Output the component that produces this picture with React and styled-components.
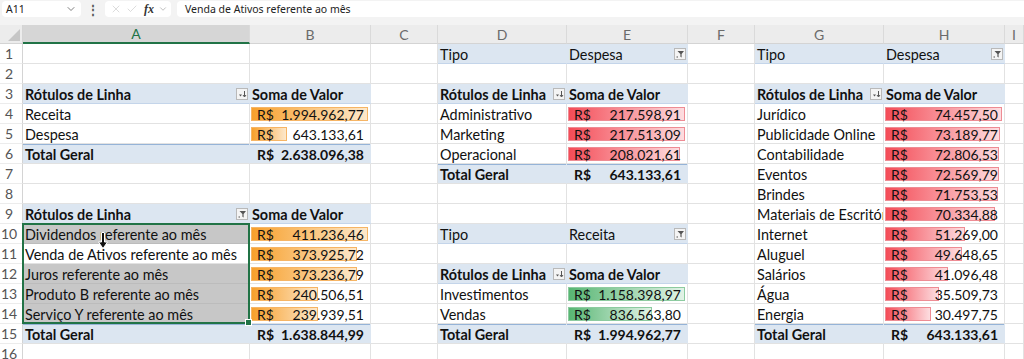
import React from "react";
import styled, { createGlobalStyle, css } from "styled-components";
import { X, Check, ChevronDown } from "lucide-react";

const sheetFont = "Lato, 'Liberation Sans', sans-serif";
const uiFont = "'Noto Sans', 'Open Sans', sans-serif";

const colors = {
  grid: "#e2e2e2",
  pivot: "#dce6f1",
  pivotLine: "#c4d5ea",
  totalLine: "#95b3d7",
  chrome: "#f3f3f3",
  header: "#ececec",
  selected: "#c7c7c7",
  excelGreen: "#217346",
};

const TONES = {
  orange: { from: "#f7a02c", to: "#fde8cb", line: "#f6b565" },
  red: { from: "#f44c57", to: "#fddde0", line: "#ee8c94" },
  green: { from: "#58b673", to: "#e2f3e7", line: "#8dcba0" },
};

const COLUMNS = ["A", "B", "C", "D", "E", "F", "G", "H", "I"];

const GlobalStyle = createGlobalStyle`
  html, body {
    margin: 0;
    padding: 0;
    background: #ffffff;
    overflow: hidden;
  }
  body {
    font-family: ${sheetFont};
  }
`;

const Page = styled.div`
  width: 1024px;
  height: 359px;
  overflow: hidden;
  background: ${colors.chrome};
`;

// formula bar
const Toolbar = styled.div`
  height: 16px;
  padding: 1px 0 8px 2px;
  display: flex;
  align-items: stretch;
  gap: 6px;
  font-family: ${uiFont};
  font-size: 10.5px;
  color: #222;
`;

const NameBox = styled.div`
  width: 79px;
  background: #fff;
  border-radius: 4px;
  display: flex;
  align-items: center;
  justify-content: space-between;
  padding: 0 4px 0 4px;
  box-sizing: border-box;
`;

const Dots = styled.div`
  width: 12px;
  display: flex;
  align-items: center;
  justify-content: center;
  font-size: 12px;
  font-weight: 700;
  color: #555;
`;

const FxBox = styled.div`
  width: 66px;
  background: #fff;
  border-radius: 4px;
  display: flex;
  align-items: center;
  gap: 4px;
  padding: 0 3px 0 5px;
  box-sizing: border-box;
  color: #c4c4c4;
`;

const Fx = styled.span`
  font-family: "Liberation Serif", serif;
  font-style: italic;
  font-weight: 700;
  font-size: 12px;
  color: #333;
  margin-left: 2px;
`;

const FormulaInput = styled.div`
  flex: 1;
  background: #fff;
  border-radius: 4px 0 0 4px;
  display: flex;
  align-items: center;
  padding-left: 8px;
`;

// sheet grid: every item is placed at its own row / column
const Sheet = styled.div`
  display: grid;
  grid-template-columns: 23px 227px 121px 67px 129px 121px 67px 129px 121px 1fr;
  grid-template-rows: 19px;
  grid-auto-rows: 20px;
  background: #fff;
  font-family: ${sheetFont};
  font-size: 14.4px;
  color: #111;
`;

const placed = css`
  grid-row: ${(p) => p.$r};
  grid-column: ${(p) => p.$c};
`;

const Corner = styled.div`
  ${placed}
  background: ${colors.header};
  border-bottom: 1px solid #d4d4d4;
  border-right: 1px solid #d4d4d4;
  display: flex;
  align-items: flex-end;
  justify-content: flex-end;
  padding: 0 2px 2px 0;
`;

const ColHead = styled.div`
  ${placed}
  background: ${(p) => (p.$active ? "#d6d6d6" : colors.header)};
  border-bottom: ${(p) => (p.$active ? `2px solid ${colors.excelGreen}` : "1px solid #d4d4d4")};
  border-right: 1px solid #dadada;
  color: ${(p) => (p.$active ? colors.excelGreen : "#6a6a6a")};
  display: flex;
  align-items: center;
  justify-content: center;
  font-size: 14px;
`;

const RowHead = styled.div`
  ${placed}
  background: #fff;
  border-right: 1px solid #d4d4d4;
  border-bottom: 1px solid #ececec;
  color: #555;
  display: flex;
  align-items: center;
  justify-content: center;
  padding-right: 4px;
  font-size: 14px;
`;

const KIND = {
  plain: css``,
  head: css`
    background: ${colors.pivot};
    border-right-color: ${colors.pivot};
    border-bottom-color: ${colors.pivotLine};
    font-weight: 700;
  `,
  filter: css`
    background: ${colors.pivot};
    border-right-color: ${colors.pivot};
    border-bottom-color: ${colors.pivotLine};
  `,
  total: css`
    background: ${colors.pivot};
    border-right-color: ${colors.pivot};
    box-shadow: inset 0 1px 0 ${colors.totalLine};
    font-weight: 700;
  `,
};

const Cell = styled.div`
  ${placed}
  position: relative;
  display: flex;
  align-items: center;
  min-width: 0;
  overflow: hidden;
  white-space: nowrap;
  padding: 1px 3px 0 2px;
  border-right: 1px solid ${colors.grid};
  border-bottom: 1px solid ${colors.grid};
  ${(p) => KIND[p.$kind || "plain"]}
  ${(p) =>
    p.$selected &&
    css`
      background: ${colors.selected};
      border-right-color: ${colors.selected};
      border-bottom-color: #bcbcbc;
    `}
`;

const Label = styled.span`
  flex: 1;
`;

const Bar = styled.span`
  position: absolute;
  left: 1px;
  top: 3px;
  bottom: 2px;
  width: calc(${(p) => p.$pct}% - 3px);
  box-sizing: border-box;
  background: linear-gradient(
    to right,
    ${(p) => TONES[p.$tone].from},
    ${(p) => TONES[p.$tone].to}
  );
  border: 1px solid ${(p) => TONES[p.$tone].line};
`;

const Money = styled.span`
  position: relative;
  flex: 1;
  display: flex;
  justify-content: space-between;
  padding: 0 3px 0 5px;
  font-size: 14px;
`;

const PivotButton = styled.span`
  width: 12px;
  height: 12px;
  flex: none;
  margin-right: -2px;
  margin-left: auto;
  box-sizing: border-box;
  border: 1px solid #b9b9b9;
  background: #f4f4f4;
  display: flex;
  align-items: center;
  justify-content: center;
`;

const Selection = styled.div`
  ${placed}
  margin: -1px 0 0 -1px;
  border: 2px solid ${colors.excelGreen};
  position: relative;
  pointer-events: none;
`;

const Handle = styled.span`
  position: absolute;
  right: -4px;
  bottom: -4px;
  width: 5px;
  height: 5px;
  background: ${colors.excelGreen};
  border: 1px solid #fff;
`;

const Cursor = styled.svg`
  position: absolute;
  left: 74px;
  top: 7px;
`;

function SortIcon() {
  return (
    <svg width="9" height="8" viewBox="0 0 9 8">
      <path d="M1 4.5 L4 4.5 L2.5 6.5 Z" fill="#555" />
      <path d="M6.5 1 V6.5 M5 5 L6.5 7 L8 5" stroke="#555" strokeWidth="1" fill="none" />
    </svg>
  );
}

function FunnelIcon() {
  return (
    <svg width="9" height="8" viewBox="0 0 9 8">
      <path d="M1.5 1 H8 L5.6 4 V7.5 L4.4 6.8 V4 Z" fill="#555" />
      <path d="M0.5 7 H2" stroke="#555" strokeWidth="1" />
    </svg>
  );
}

const toNumber = (s) => parseFloat(s.replace(/\./g, "").replace(",", "."));

const txt = (t) => ({ t });
const head = (t, btn) => ({ t, kind: "head", btn });
const filt = (t, btn) => ({ t, kind: "filter", btn });
const total = (t) => ({ t, kind: "total" });
const sum = (v) => ({ money: v, kind: "total" });
const bar = (v, tone, max) => ({
  money: v,
  tone,
  pct: (toNumber(v) / toNumber(max)) * 100,
});

const hMax = "74.457,50";
const rows = {
  1: { D: filt("Tipo"), E: filt("Despesa", "funnel"), G: filt("Tipo"), H: filt("Despesa", "funnel") },
  3: {
    A: head("Rótulos de Linha", "sort"),
    B: head("Soma de Valor"),
    D: head("Rótulos de Linha", "sort"),
    E: head("Soma de Valor"),
    G: head("Rótulos de Linha", "sort"),
    H: head("Soma de Valor"),
  },
  4: {
    A: txt("Receita"),
    B: bar("1.994.962,77", "orange", "1.994.962,77"),
    D: txt("Administrativo"),
    E: bar("217.598,91", "red", "217.598,91"),
    G: txt("Jurídico"),
    H: bar("74.457,50", "red", hMax),
  },
  5: {
    A: txt("Despesa"),
    B: bar("643.133,61", "orange", "1.994.962,77"),
    D: txt("Marketing"),
    E: bar("217.513,09", "red", "217.598,91"),
    G: txt("Publicidade Online"),
    H: bar("73.189,77", "red", hMax),
  },
  6: {
    A: total("Total Geral"),
    B: sum("2.638.096,38"),
    D: txt("Operacional"),
    E: bar("208.021,61", "red", "217.598,91"),
    G: txt("Contabilidade"),
    H: bar("72.806,53", "red", hMax),
  },
  7: {
    D: total("Total Geral"),
    E: sum("643.133,61"),
    G: txt("Eventos"),
    H: bar("72.569,79", "red", hMax),
  },
  8: { G: txt("Brindes"), H: bar("71.753,53", "red", hMax) },
  9: {
    A: head("Rótulos de Linha", "funnel"),
    B: head("Soma de Valor"),
    G: txt("Materiais de Escritório"),
    H: bar("70.334,88", "red", hMax),
  },
  10: {
    A: { ...txt("Dividendos referente ao mês"), selected: true },
    B: bar("411.236,46", "orange", "411.236,46"),
    D: filt("Tipo"),
    E: filt("Receita", "funnel"),
    G: txt("Internet"),
    H: bar("51.269,00", "red", hMax),
  },
  11: {
    A: txt("Venda de Ativos referente ao mês"),
    B: bar("373.925,72", "orange", "411.236,46"),
    G: txt("Aluguel"),
    H: bar("49.648,65", "red", hMax),
  },
  12: {
    A: { ...txt("Juros referente ao mês"), selected: true },
    B: bar("373.236,79", "orange", "411.236,46"),
    D: head("Rótulos de Linha", "sort"),
    E: head("Soma de Valor"),
    G: txt("Salários"),
    H: bar("41.096,48", "red", hMax),
  },
  13: {
    A: { ...txt("Produto B referente ao mês"), selected: true },
    B: bar("240.506,51", "orange", "411.236,46"),
    D: txt("Investimentos"),
    E: bar("1.158.398,97", "green", "1.158.398,97"),
    G: txt("Água"),
    H: bar("35.509,73", "red", hMax),
  },
  14: {
    A: { ...txt("Serviço Y referente ao mês"), selected: true },
    B: bar("239.939,51", "orange", "411.236,46"),
    D: txt("Vendas"),
    E: bar("836.563,80", "green", "1.158.398,97"),
    G: txt("Energia"),
    H: bar("30.497,75", "red", hMax),
  },
  15: {
    A: total("Total Geral"),
    B: sum("1.638.844,99"),
    D: total("Total Geral"),
    E: sum("1.994.962,77"),
    G: total("Total Geral"),
    H: sum("643.133,61"),
  },
};

function SheetCell({ data, r, c }) {
  if (!data) return <Cell $r={r} $c={c} />;
  return (
    <Cell $r={r} $c={c} $kind={data.kind} $selected={data.selected}>
      {data.tone && <Bar $tone={data.tone} $pct={data.pct} />}
      {data.money ? (
        <Money>
          <span>R$</span>
          <span>{data.money}</span>
        </Money>
      ) : (
        <Label>{data.t}</Label>
      )}
      {data.btn && (
        <PivotButton>{data.btn === "sort" ? <SortIcon /> : <FunnelIcon />}</PivotButton>
      )}
    </Cell>
  );
}

export default function App() {
  const rowNumbers = Array.from({ length: 16 }, (_, i) => i + 1);
  return (
    <Page>
      <GlobalStyle />
      <Toolbar>
        <NameBox>
          <span>A11</span>
          <ChevronDown size={12} color="#555" strokeWidth={1.5} />
        </NameBox>
        <Dots>⋮</Dots>
        <FxBox>
          <X size={12} strokeWidth={1.2} />
          <Check size={12} strokeWidth={1.2} />
          <Fx>fx</Fx>
          <ChevronDown size={10} color="#999" strokeWidth={1.5} />
        </FxBox>
        <FormulaInput>Venda de Ativos referente ao mês</FormulaInput>
      </Toolbar>

      <Sheet>
        <Corner $r={1} $c={1}>
          <svg width="12" height="12" viewBox="0 0 12 12">
            <path d="M12 0 V12 H0 Z" fill="#c6c6c6" />
          </svg>
        </Corner>
        {COLUMNS.map((c, i) => (
          <ColHead key={c} $r={1} $c={i + 2} $active={c === "A"}>
            {c}
          </ColHead>
        ))}

        {rowNumbers.map((r) => (
          <React.Fragment key={r}>
            <RowHead $r={r + 1} $c={1}>
              {r}
            </RowHead>
            {COLUMNS.map((c, i) => (
              <SheetCell key={c} r={r + 1} c={i + 2} data={rows[r] && rows[r][c]} />
            ))}
          </React.Fragment>
        ))}

        <Selection $r="11 / span 5" $c={2}>
          <Cursor width="10" height="17" viewBox="0 0 10 17">
            <path
              d="M3.5 0.5 H6.5 V10 H9.5 L5 16.5 L0.5 10 H3.5 Z"
              fill="#111"
              stroke="#fff"
              strokeWidth="1"
            />
          </Cursor>
          <Handle />
        </Selection>
      </Sheet>
    </Page>
  );
}
